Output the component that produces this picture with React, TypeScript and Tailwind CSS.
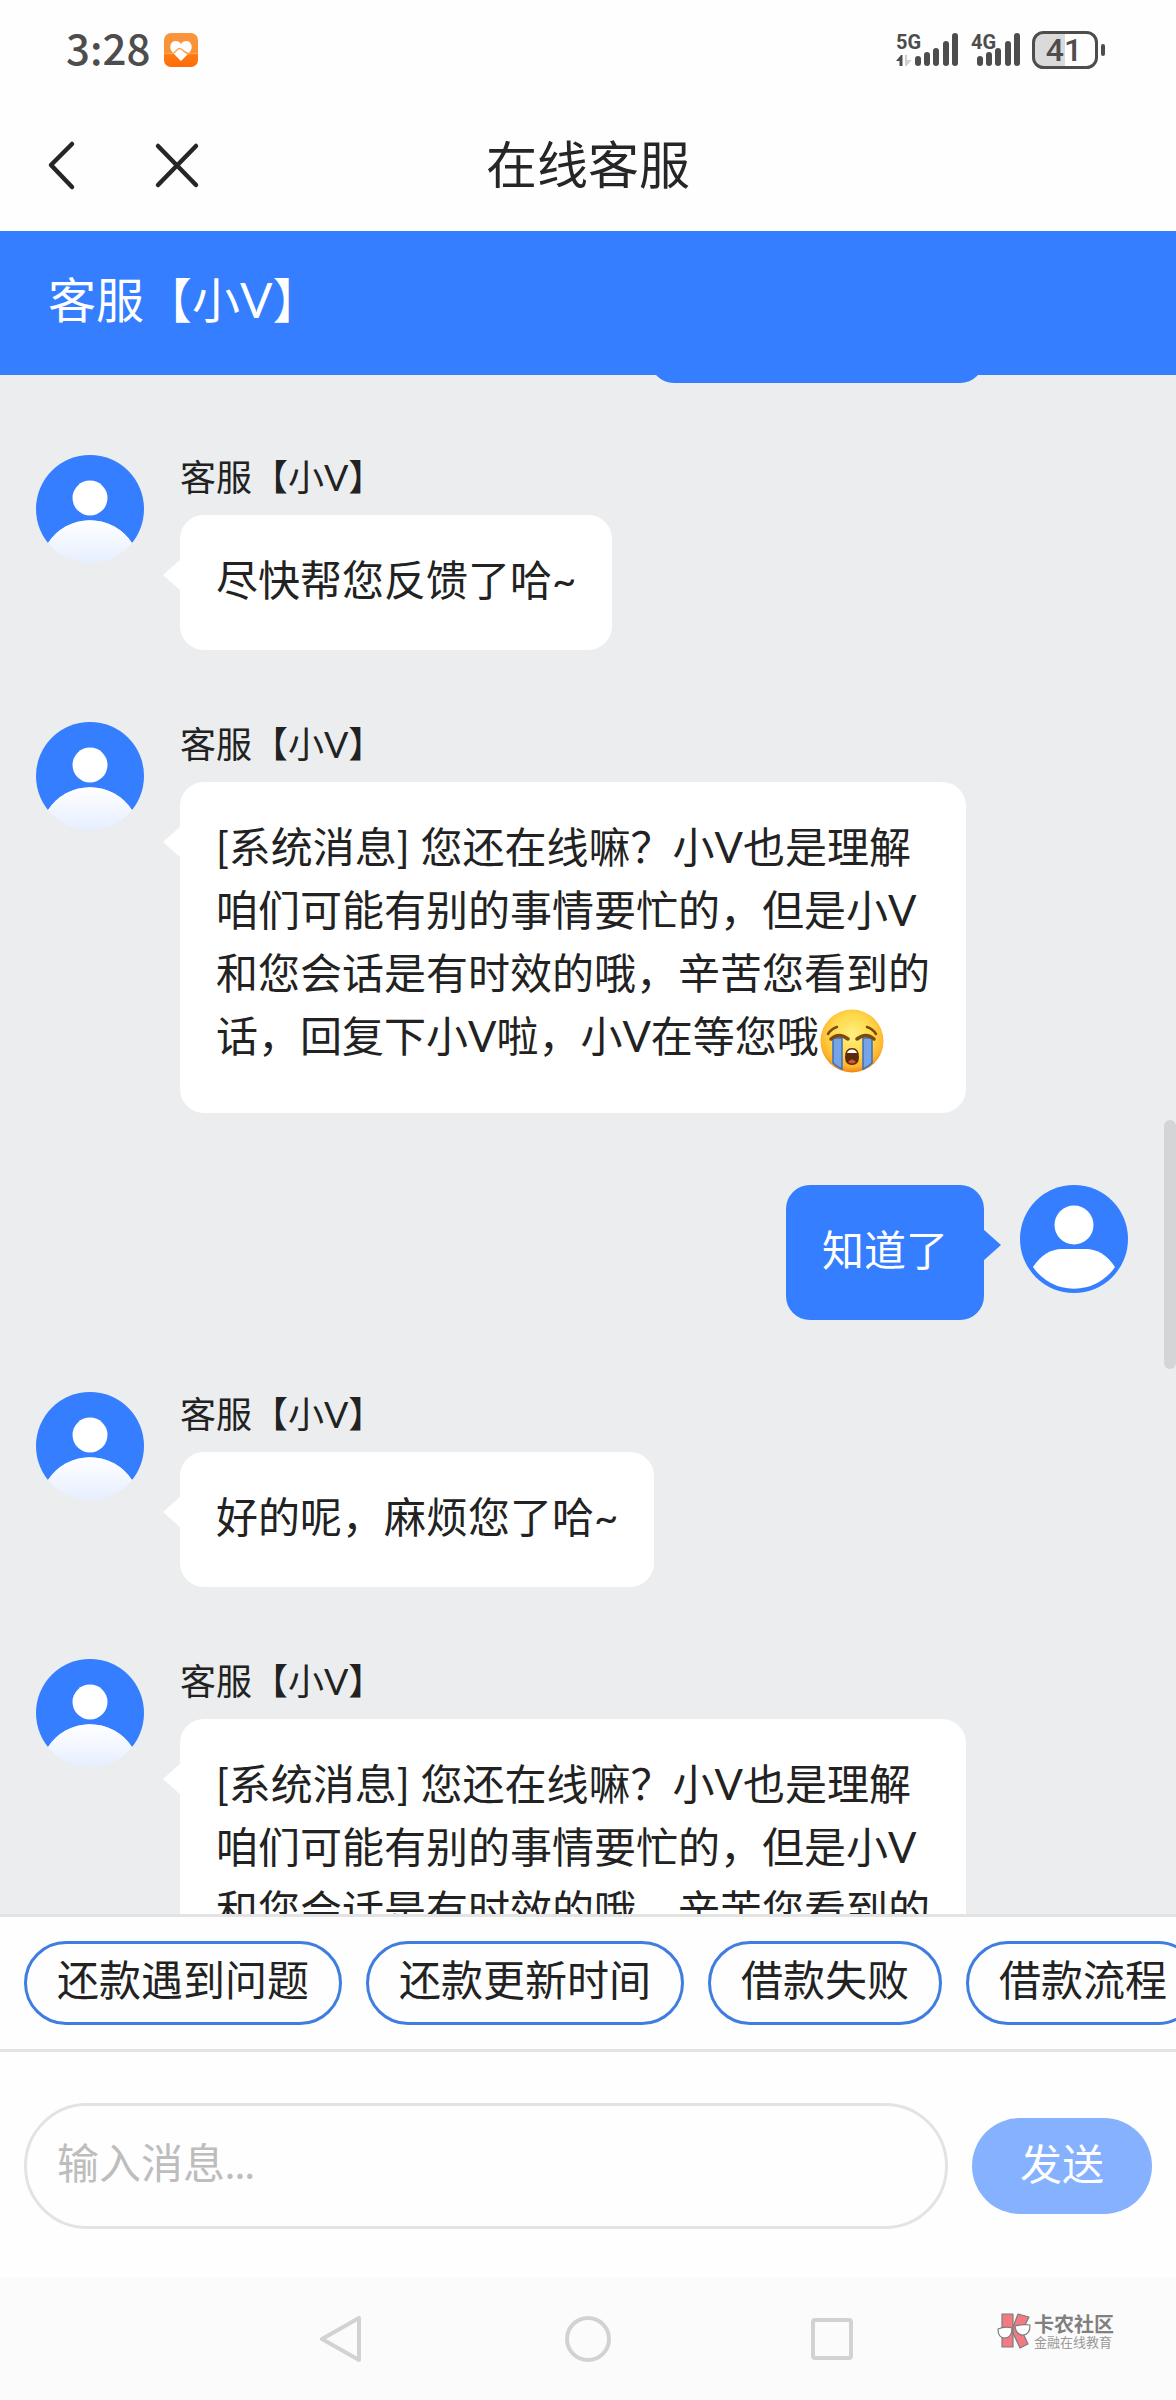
type Message = { id: number; from: "agent" | "user"; text: string; crying?: boolean };

const agentName = "客服【小V】";

const systemText =
  "[系统消息] 您还在线嘛\uff1f小V也是理解咱们可能有别的事情要忙的\uff0c但是小V和您会话是有时效的哦\uff0c辛苦您看到的话\uff0c回复下小V啦\uff0c小V在等您哦";

const messages: Message[] = [
  { id: 1, from: "agent", text: "尽快帮您反馈了哈~" },
  { id: 2, from: "agent", text: systemText, crying: true },
  { id: 3, from: "user", text: "知道了" },
  { id: 4, from: "agent", text: "好的呢\uff0c麻烦您了哈~" },
  { id: 5, from: "agent", text: systemText, crying: true },
];

const quickReplies = ["还款遇到问题", "还款更新时间", "借款失败", "借款流程"];

const SignalBars = () => (
  <>
    <rect x="0" y="23" width="6" height="10" rx="3" />
    <rect x="9" y="19" width="6" height="14" rx="3" />
    <rect x="18" y="15" width="6" height="18" rx="3" />
    <rect x="28" y="8" width="6" height="25" rx="3" />
    <rect x="37" y="0" width="6" height="33" rx="3" />
  </>
);

const HeartAppIcon = () => (
  <svg width="34" height="34" viewBox="0 0 34 34" aria-hidden="true">
    <defs>
      <linearGradient id="heartBg" x1="0" y1="0" x2="0" y2="1">
        <stop offset="0" stopColor="#f9953f" />
        <stop offset="0.58" stopColor="#fb9030" />
        <stop offset="0.62" stopColor="#ff7a12" />
        <stop offset="1" stopColor="#ff6c0a" />
      </linearGradient>
    </defs>
    <rect width="34" height="34" rx="7" fill="url(#heartBg)" />
    <path d="M17 28 L8.5 19.5 C4 14 7 8 11.5 8 C14 8 16 9 17 11 C18 9 20 8 22.5 8 C27 8 30 14 25.5 19.5 Z" fill="#fff" />
    <path d="M0 20.5 H8 C12 20.5 12 15.5 15.5 15.5 C19.5 15.5 20 20.5 24.5 20.5 H34" fill="none" stroke="#fba554" strokeWidth="1.5" />
  </svg>
);

const StatusBar = () => (
  <div className="flex h-25 shrink-0 items-center justify-between pr-[70px] pl-[66px] text-[#4d4d4d]">
    <div className="flex items-center gap-3.5">
      <span className="pb-1.5 font-['Noto_Sans_CJK_SC',sans-serif] text-[42px] leading-[60px] font-medium">3:28</span>
      <HeartAppIcon />
    </div>
    <div className="flex items-center">
      <svg className="overflow-visible" width="75" height="34" viewBox="0 0 75 34" fill="currentColor" aria-label="5G">
        <text x="0" y="16" fontSize="20" fontWeight="700" fontFamily="Roboto, sans-serif">5G</text>
        <path d="M0 28 L5 22 H6.5 V33 H3.5 V28 Z" />
        <path d="M9 22 H11 V27 H15.5 L10.5 33 H9 Z" fill="#cfcfcf" />
        <g transform="translate(19 0)"><SignalBars /></g>
      </svg>
      <svg className="overflow-visible" width="61" height="34" viewBox="0 0 61 34" fill="currentColor" aria-label="4G">
        <text x="0" y="16" fontSize="20" fontWeight="700" fontFamily="Roboto, sans-serif">4G</text>
        <g transform="translate(6 0)"><SignalBars /></g>
      </svg>
      <svg className="overflow-visible" width="74" height="38" viewBox="0 0 74 38" aria-label="41%">
        <path d="M11 2 H33 V36 H11 Q2 36 2 27 V11 Q2 2 11 2 Z" fill="#dadada" />
        <rect x="1.5" y="1.5" width="63" height="35" rx="10" fill="none" stroke="currentColor" strokeWidth="3" />
        <rect x="69" y="13" width="4" height="12" rx="2" fill="currentColor" />
        <text x="32" y="30" textAnchor="middle" fontSize="32" fontWeight="500" fill="currentColor" fontFamily="Roboto, sans-serif">
          41
        </text>
      </svg>
    </div>
  </div>
);

const PageHeader = () => (
  <header className="grid h-[131px] shrink-0 grid-cols-[1fr_auto_1fr] items-center px-9 pb-0.5 text-[#262628]">
    <div className="flex items-center gap-[53px]">
      <button type="button" aria-label="返回">
        <svg width="52" height="52" viewBox="0 0 52 52" fill="none" stroke="currentColor" strokeWidth="4.5" strokeLinecap="round" strokeLinejoin="round">
          <path d="M36 5 L15 26 L36 48" />
        </svg>
      </button>
      <button type="button" aria-label="关闭">
        <svg width="72" height="52" viewBox="0 0 72 52" fill="none" stroke="currentColor" strokeWidth="4.5" strokeLinecap="round">
          <path d="M17 7 L55 46 M55 7 L17 46" />
        </svg>
      </button>
    </div>
    <h1 className="text-[51px] leading-[72px]">在线客服</h1>
  </header>
);

const AgentAvatar = ({ id }: { id: number }) => (
  <svg className="shrink-0" width="108" height="108" viewBox="0 0 108 108" aria-hidden="true">
    <defs>
      <linearGradient id={`agentBody${id}`} x1="0" y1="65" x2="0" y2="108" gradientUnits="userSpaceOnUse">
        <stop offset="0" stopColor="#ffffff" />
        <stop offset="1" stopColor="#e6eeff" />
      </linearGradient>
      <clipPath id={`agentClip${id}`}>
        <circle cx="54" cy="54" r="54" />
      </clipPath>
    </defs>
    <g clipPath={`url(#agentClip${id})`}>
      <path d="M0 0 H108 V88 H96 A50 50 0 0 0 12 88 H0 Z" fill="#347eff" />
      <path d="M12 88 A50 50 0 0 1 96 88 L108 108 H0 Z" fill={`url(#agentBody${id})`} />
    </g>
    <circle cx="54" cy="43" r="17.5" fill="#fff" />
  </svg>
);

const UserAvatar = () => (
  <svg className="shrink-0" width="108" height="108" viewBox="0 0 108 108" aria-hidden="true">
    <circle cx="54" cy="54" r="54" fill="#347eff" />
    <circle cx="54" cy="40" r="19.5" fill="#fff" />
    <path d="M13 82 Q25 64 42 64 H66 Q83 64 95 82 A49.5 49.5 0 0 1 13 82 Z" fill="#fff" />
  </svg>
);

const CryingFace = () => (
  <svg className="mx-px my-0.5 inline-block align-middle" width="64" height="64" viewBox="0 0 64 64" role="img" aria-label="大哭">
    <defs>
      <radialGradient id="face" cx="0.5" cy="0.4" r="0.6">
        <stop offset="0" stopColor="#fff080" />
        <stop offset="0.55" stopColor="#ffd84a" />
        <stop offset="0.85" stopColor="#ffb42c" />
        <stop offset="1" stopColor="#ec8418" />
      </radialGradient>
    </defs>
    <circle cx="32" cy="32" r="31.5" fill="url(#face)" />
    <path d="M13 29 H22 V60 Q17 58 13 54 Z" fill="#76a4e8" stroke="#3f6eb8" strokeWidth="1.5" />
    <path d="M43 29 H52 V54 Q48 58 43 60 Z" fill="#76a4e8" stroke="#3f6eb8" strokeWidth="1.5" />
    <path d="M8 25 Q11 20 17 18 M56 25 Q53 20 47 18" fill="none" stroke="#7a4a10" strokeWidth="2.5" strokeLinecap="round" />
    <path d="M11 30 Q19 23 28 30 M37 30 Q46 23 54 30" fill="none" stroke="#7a4a10" strokeWidth="3.5" strokeLinecap="round" />
    <path d="M25 48 Q25 39 32 39 Q39 39 39 48 Q39 56 32 56 Q25 56 25 48 Z" fill="#5c2a0a" />
    <path d="M27 44 Q28 40.5 32 40.5 Q36 40.5 37 44 Z" fill="#fff" />
    <path d="M28 53 Q32 48 36 53 Q32 56 28 53 Z" fill="#d05a3a" />
  </svg>
);

const AgentMessage = ({ message }: { message: Message }) => (
  <li className="flex items-start gap-9">
    <AgentAvatar id={message.id} />
    <div className="flex flex-col items-start gap-4">
      <p className="text-[36px] leading-[44px]">{agentName}</p>
      <div className="relative max-w-[786px] rounded-[24px] bg-white px-9 pt-[34px] pb-[38px] text-[42px] leading-[63px] before:absolute before:top-11 before:-left-[17px] before:border-y-[16px] before:border-r-[18px] before:border-y-transparent before:border-r-white">
        {message.text}
        {message.crying && <CryingFace />}
      </div>
    </div>
  </li>
);

const UserMessage = ({ message }: { message: Message }) => (
  <li className="flex items-start justify-end gap-9">
    <div className="relative max-w-[786px] rounded-[24px] bg-[#347eff] px-9 pt-[34px] pb-[38px] text-[42px] leading-[63px] text-white before:absolute before:top-11 before:-right-[17px] before:border-y-[16px] before:border-l-[18px] before:border-y-transparent before:border-l-[#347eff]">
      {message.text}
    </div>
    <UserAvatar />
  </li>
);

const ChatLog = () => (
  <main className="relative min-h-0 flex-1 overflow-hidden bg-[#ebedef] pr-12 pl-9">
    {/* Tail end of an earlier reply, scrolled under the title bar */}
    <div className="-mt-8 mr-36 ml-auto h-10 w-[334px] rounded-b-[24px] bg-[#347eff]" />
    <ul className="mt-18 flex flex-col gap-18">
      {messages.map((message) =>
        message.from === "agent" ? (
          <AgentMessage key={message.id} message={message} />
        ) : (
          <UserMessage key={message.id} message={message} />
        )
      )}
    </ul>
    {/* Scroll thumb */}
    <div className="absolute top-[745px] right-0 h-[249px] w-3 rounded-full bg-[#d3d5d7]" />
  </main>
);

const QuickReplies = () => (
  <div className="flex shrink-0 gap-6 overflow-hidden border-y-3 border-[#e3e3e3] px-6 py-6">
    {quickReplies.map((label) => (
      <button
        key={label}
        type="button"
        className="h-21 shrink-0 rounded-full border-3 border-[#3f7de0] px-[30px] pb-1.5 text-[42px] leading-[63px] whitespace-nowrap"
      >
        {label}
      </button>
    ))}
  </div>
);

const Composer = () => (
  <form className="flex shrink-0 items-center gap-6 px-6 pt-[51px] pb-12" onSubmit={(e) => e.preventDefault()}>
    <input
      type="text"
      aria-label="输入消息"
      placeholder="输入消息..."
      className="h-[126px] min-w-0 flex-1 rounded-full border-3 border-[#e3e3e3] px-[30px] pb-1.5 text-[42px] outline-none placeholder:text-[#bdbdbd]"
    />
    <button type="submit" className="h-24 w-45 rounded-full bg-[#85b1ff] pb-1 text-[42px] leading-[63px] text-white">
      发送
    </button>
  </form>
);

const Watermark = () => (
  <div className="absolute top-9 right-[62px] flex items-start gap-[3px]">
    <svg width="34" height="36" viewBox="0 0 34 36" stroke="#7d7d7d" strokeWidth="1.2" strokeLinejoin="round" aria-hidden="true">
      <path d="M5 1 H16 V34 H5 Z" fill="#f27a82" />
      <path d="M21 1 L32 4 L25 18 L31 31 L23 35 L16 20 V14 Z" fill="#f27a82" />
      <path d="M1 16 Q8 13 15 15 Q15 25 8 25 Q1 25 1 16 Z" fill="#fff" />
      <path d="M18 13 Q26 11 33 12 Q33 22 26 22 Q19 22 18 13 Z" fill="#fff" />
    </svg>
    <div className="flex flex-col">
      <span className="text-[20px] leading-[22px] font-bold text-[#808080]">卡农社区</span>
      <span className="text-[13px] leading-[14px] text-[#999]">金融在线教育</span>
    </div>
  </div>
);

const NavigationBar = () => (
  <nav className="relative flex h-[123px] shrink-0 items-center justify-center gap-[199px] bg-[#fbfbfb] text-[#d2d2d2]">
    <button type="button" aria-label="返回">
      <svg width="46" height="46" viewBox="0 0 46 46" fill="none" stroke="currentColor" strokeWidth="4" strokeLinejoin="round">
        <path d="M39 2 V44 L2 23 Z" />
      </svg>
    </button>
    <button type="button" aria-label="主页">
      <svg width="46" height="46" viewBox="0 0 46 46" fill="none" stroke="currentColor" strokeWidth="4">
        <circle cx="23" cy="23" r="21" />
      </svg>
    </button>
    <button type="button" aria-label="最近任务">
      <svg width="46" height="46" viewBox="0 0 46 46" fill="none" stroke="currentColor" strokeWidth="4">
        <rect x="3" y="4" width="38" height="38" rx="2" />
      </svg>
    </button>
    <Watermark />
  </nav>
);

export default function App() {
  return (
    <div className="flex h-screen flex-col overflow-hidden bg-[#fefefe] font-[Lato,'Noto_Sans_CJK_SC',sans-serif] text-[#222]">
      <StatusBar />
      <PageHeader />
      <div className="flex h-36 shrink-0 items-center bg-[#347eff] px-12 pb-1.5 text-[48px] leading-[72px] text-white">
        {agentName}
      </div>
      <ChatLog />
      <QuickReplies />
      <Composer />
      <NavigationBar />
    </div>
  );
}
